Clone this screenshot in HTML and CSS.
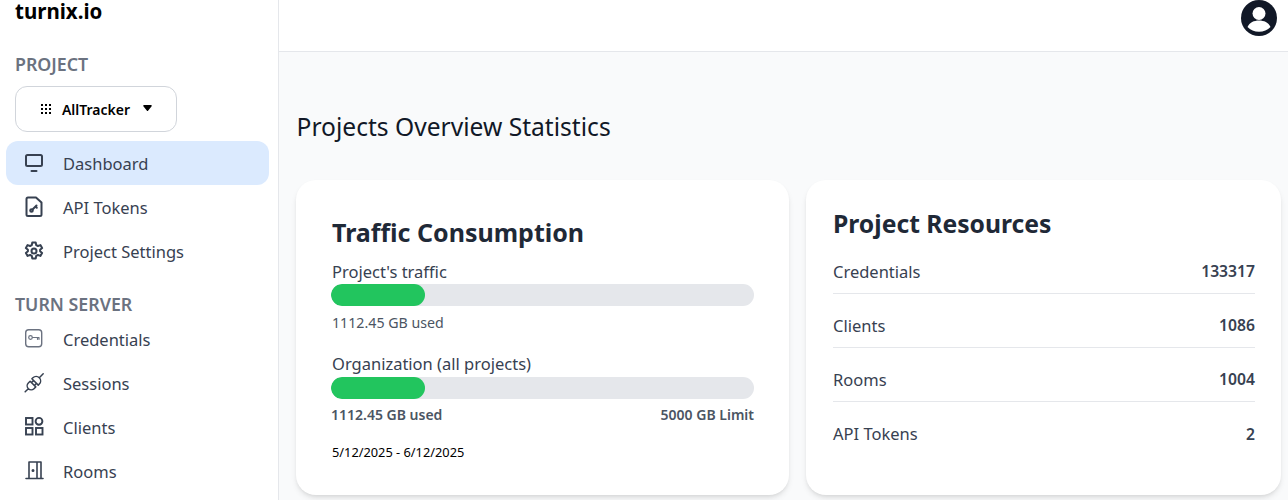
FILE: index.html
```html
<!DOCTYPE html>
<html lang="en">
<head>
<meta charset="utf-8">
<title>turnix.io</title>
<link rel="stylesheet" href="styles.css">
</head>
<body>
<div class="app">
  <aside class="sidebar">
    <div class="logo">turnix.io</div>
    <div class="section-label first">PROJECT</div>
    <button class="project-btn">
      <svg class="grid-ico" width="12" height="12" viewBox="0 0 12 12" fill="currentColor"><rect x="1" y="1" width="2" height="2"/><rect x="5" y="1" width="2" height="2"/><rect x="9" y="1" width="2" height="2"/><rect x="1" y="5" width="2" height="2"/><rect x="5" y="5" width="2" height="2"/><rect x="9" y="5" width="2" height="2"/><rect x="1" y="9" width="2" height="2"/><rect x="5" y="9" width="2" height="2"/><rect x="9" y="9" width="2" height="2"/></svg>
      <span>AllTracker</span>
      <svg class="caret" width="9" height="6.500" viewBox="0 0 10 7" fill="currentColor"><path d="M1 0h8a.8.8 0 0 1 .6 1.300L5.600 6.300a.8.8 0 0 1-1.200 0L.4 1.300A.8.8 0 0 1 1 0z"/></svg>
    </button>
    <nav class="nav">
      <a class="nav-item active">
        <svg class="ico" viewBox="0 0 24 24" fill="none" stroke="currentColor" stroke-width="2" stroke-linejoin="round" stroke-linecap="round"><rect x="4" y="4" width="16" height="11" rx="1.500"/><path d="M9.500 20h5"/></svg>
        <span>Dashboard</span>
      </a>
      <a class="nav-item">
        <svg class="ico" viewBox="0 0 24 24" fill="none" stroke="currentColor" stroke-width="2" stroke-linejoin="round" stroke-linecap="round"><path d="M6 2.500h8l5.500 5V19.500a1.500 1.500 0 0 1-1.500 1.500H6a1.500 1.500 0 0 1-1.500-1.500V4A1.500 1.500 0 0 1 6 2.500z"/><circle cx="9.500" cy="15.500" r="1.300"/><path d="M11 14l3.500-3.500M13.500 11.500l1.300 1.300"/></svg>
        <span>API Tokens</span>
      </a>
      <a class="nav-item">
        <svg class="ico" viewBox="0 0 24 24" fill="none" stroke="currentColor" stroke-width="2" stroke-linejoin="round"><path d="M10.300 3h3.400l.5 2.600 1.700.9 2.500-.9 1.700 3-2 1.700v1.400l2 1.700-1.700 3-2.500-.9-1.700.9-.5 2.600h-3.400l-.5-2.600-1.700-.9-2.500.9-1.700-3 2-1.700v-1.400l-2-1.700 1.700-3 2.500.9 1.700-.9z" transform="translate(0 .5)"/><circle cx="12" cy="12" r="2.500"/></svg>
        <span>Project Settings</span>
      </a>
    </nav>
    <div class="section-label second">TURN SERVER</div>
    <nav class="nav">
      <a class="nav-item">
        <svg class="ico ico-soft" viewBox="0 0 24 24" fill="none" stroke="currentColor" stroke-width="1.200" stroke-linejoin="round" stroke-linecap="round"><rect x="3.700" y="2.700" width="16" height="17" rx="3" stroke-width="1.400"/><circle cx="8.500" cy="10.500" r="1.800"/><path d="M10.500 10.500h6.500M15.500 10.500v1.800M17 10.500v1.800"/></svg>
        <span>Credentials</span>
      </a>
      <a class="nav-item">
        <svg class="ico" viewBox="0 0 24 24" fill="none" stroke="currentColor" stroke-width="1.500" stroke-linejoin="round" stroke-linecap="round"><g transform="rotate(-45 12 12)"><path d="M-.5 12h4.500M10.500 8H8a4 4 0 0 0 0 8h2.500zM10.500 10H13M10.500 14H13M13.500 7.500v9H15a4.500 4.500 0 0 0 0-9zM19.500 12H25"/></g></svg>
        <span>Sessions</span>
      </a>
      <a class="nav-item">
        <svg class="ico" viewBox="0 0 24 24" fill="none" stroke="currentColor" stroke-width="1.900" stroke-linejoin="miter"><rect x="4" y="3" width="6.500" height="6.500"/><circle cx="17" cy="6.300" r="3.400"/><rect x="4" y="13" width="6.500" height="6.500"/><rect x="14" y="13" width="6.500" height="6.500"/></svg>
        <span>Clients</span>
      </a>
      <a class="nav-item">
        <svg class="ico" viewBox="0 0 24 24" fill="none" stroke="currentColor" stroke-width="1.600" stroke-linejoin="round" stroke-linecap="round"><path d="M4 19.500h17M7 19.500V3h12v16.500M15 3v16.500"/><circle cx="11" cy="11.500" r=".7" fill="currentColor"/></svg>
        <span>Rooms</span>
      </a>
    </nav>
  </aside>
  <div class="main">
    <header class="topbar">
      <svg class="avatar" viewBox="0 0 36 36"><circle cx="18" cy="18" r="18" fill="#111827"/><circle cx="18" cy="13.500" r="6.500" fill="#fff"/><path d="M6.500 27c2-4.500 6.500-6.500 11.500-6.500s9.500 2 11.500 6.500c-2.800 3-7 4.800-11.500 4.800S9.300 30 6.500 27z" fill="#fff"/></svg>
    </header>
    <main class="content">
      <h1 class="page-title">Projects Overview Statistics</h1>
      <div class="cards">
        <section class="card traffic">
          <h2 class="traffic-title">Traffic Consumption</h2>
          <div class="meter-label">Project's traffic</div>
          <div class="bar"><div class="fill" style="width:22.300%"></div></div>
          <div class="used">1112.45 GB used</div>
          <div class="meter-label second-meter">Organization (all projects)</div>
          <div class="bar"><div class="fill" style="width:22.300%"></div></div>
          <div class="limits"><span>1112.45 GB used</span><span>5000 GB Limit</span></div>
          <div class="dates">5/12/2025 - 6/12/2025</div>
        </section>
        <section class="card resources">
          <h2 class="res-title">Project Resources</h2>
          <div class="res-row"><span>Credentials</span><b>133317</b></div>
          <div class="res-row"><span>Clients</span><b>1086</b></div>
          <div class="res-row"><span>Rooms</span><b>1004</b></div>
          <div class="res-row last"><span>API Tokens</span><b>2</b></div>
        </section>
      </div>
    </main>
  </div>
</div>
</body>
</html>
```
FILE: styles.css
```css
* { box-sizing: border-box; }
html, body { margin: 0; height: 100%; overflow: hidden; }
body { font-family: "Noto Sans", "Open Sans", sans-serif; background: #f9fafb; color: #111827; }
.app { display: flex; height: 500px; }
.sidebar { width: 279px; flex: none; background: #fff; border-right: 1px solid #e5e7eb; padding: 0 9px 0 6px; }
.logo { font-size: 20.500px; font-weight: 700; line-height: 22px; color: #000; margin-left: 9px; height: 22px; }
.section-label { font-size: 17.800px; font-weight: 600; color: #6b7280; line-height: 24px; margin-left: 9px; }
.section-label.first { margin-top: 30px; }
.section-label.second { margin-top: 19px; margin-bottom: 1px; }
.project-btn { display: flex; align-items: center; justify-content: center; gap: 10px; width: 162px; height: 46px; margin: 10px 0 9px 9px; background: #fff; border: 1px solid #d1d5db; border-radius: 12px; font: 600 14px "Noto Sans", sans-serif; color: #000; }
.caret { margin-left: 3px; margin-top: -2px; }
.nav { display: flex; flex-direction: column; }
.nav-item { display: flex; align-items: center; height: 44px; padding-left: 16px; gap: 17px; border-radius: 12px; color: #374151; font-size: 16.500px; }
.nav-item.active { background: #dbeafe; }
.ico { width: 24px; height: 24px; flex: none; }
.ico-soft { color: #6b7280; }
.main { flex: 1; min-width: 0; display: flex; flex-direction: column; }
.topbar { height: 52px; flex: none; background: #fff; border-bottom: 1px solid #e5e7eb; display: flex; justify-content: flex-end; padding: 0 11px 0 0; }
.avatar { width: 36px; height: 36px; }
.content { padding: 0 7px 0 17px; }
.page-title { font-size: 24.600px; font-weight: 400; line-height: 32px; margin: 59px 0 0 .5px; color: #111827; }
.cards { display: flex; gap: 17px; margin-top: 37px; }
.card { background: #fff; border-radius: 20px; height: 315px; box-shadow: 0 4px 6px -1px rgba(0,0,0,.1), 0 2px 4px -2px rgba(0,0,0,.1); }
.traffic { width: 493px; padding: 34px 35px 0; }
.resources { flex: 1; padding: 28px 26px 0 27px; }
h2 { margin: 0; font-weight: 700; color: #1f2937; font-size: 25px; line-height: 36px; }
.traffic-title { padding-left: 1px; }
h2.res-title { font-size: 24.700px; line-height: 32px; }
.meter-label { font-size: 16.500px; line-height: 24px; color: #374151; margin-top: 10px; padding-left: 1px; }
.second-meter { margin-top: 19px; margin-bottom: 1px; }
.bar { height: 22px; background: #e5e7eb; border-radius: 11px; overflow: hidden; }
.fill { height: 100%; background: #22c55e; border-radius: 11px; }
.used { font-size: 14.200px; line-height: 20px; color: #4b5563; margin-top: 7px; padding-left: 1px; }
.limits { display: flex; justify-content: space-between; font-size: 14px; line-height: 20px; font-weight: 600; color: #4b5563; margin-top: 6px; }
.dates { font-size: 12.800px; line-height: 16px; color: #000; margin-top: 19px; padding-left: 1px; }
.res-row { display: flex; justify-content: space-between; align-items: center; height: 54px; padding-top: 9px; border-bottom: 1px solid #e5e7eb; font-size: 16.500px; color: #374151; }
.res-row b { font-weight: 600; font-size: 15.700px; }
.res-row.last { border-bottom: 0; }
```
